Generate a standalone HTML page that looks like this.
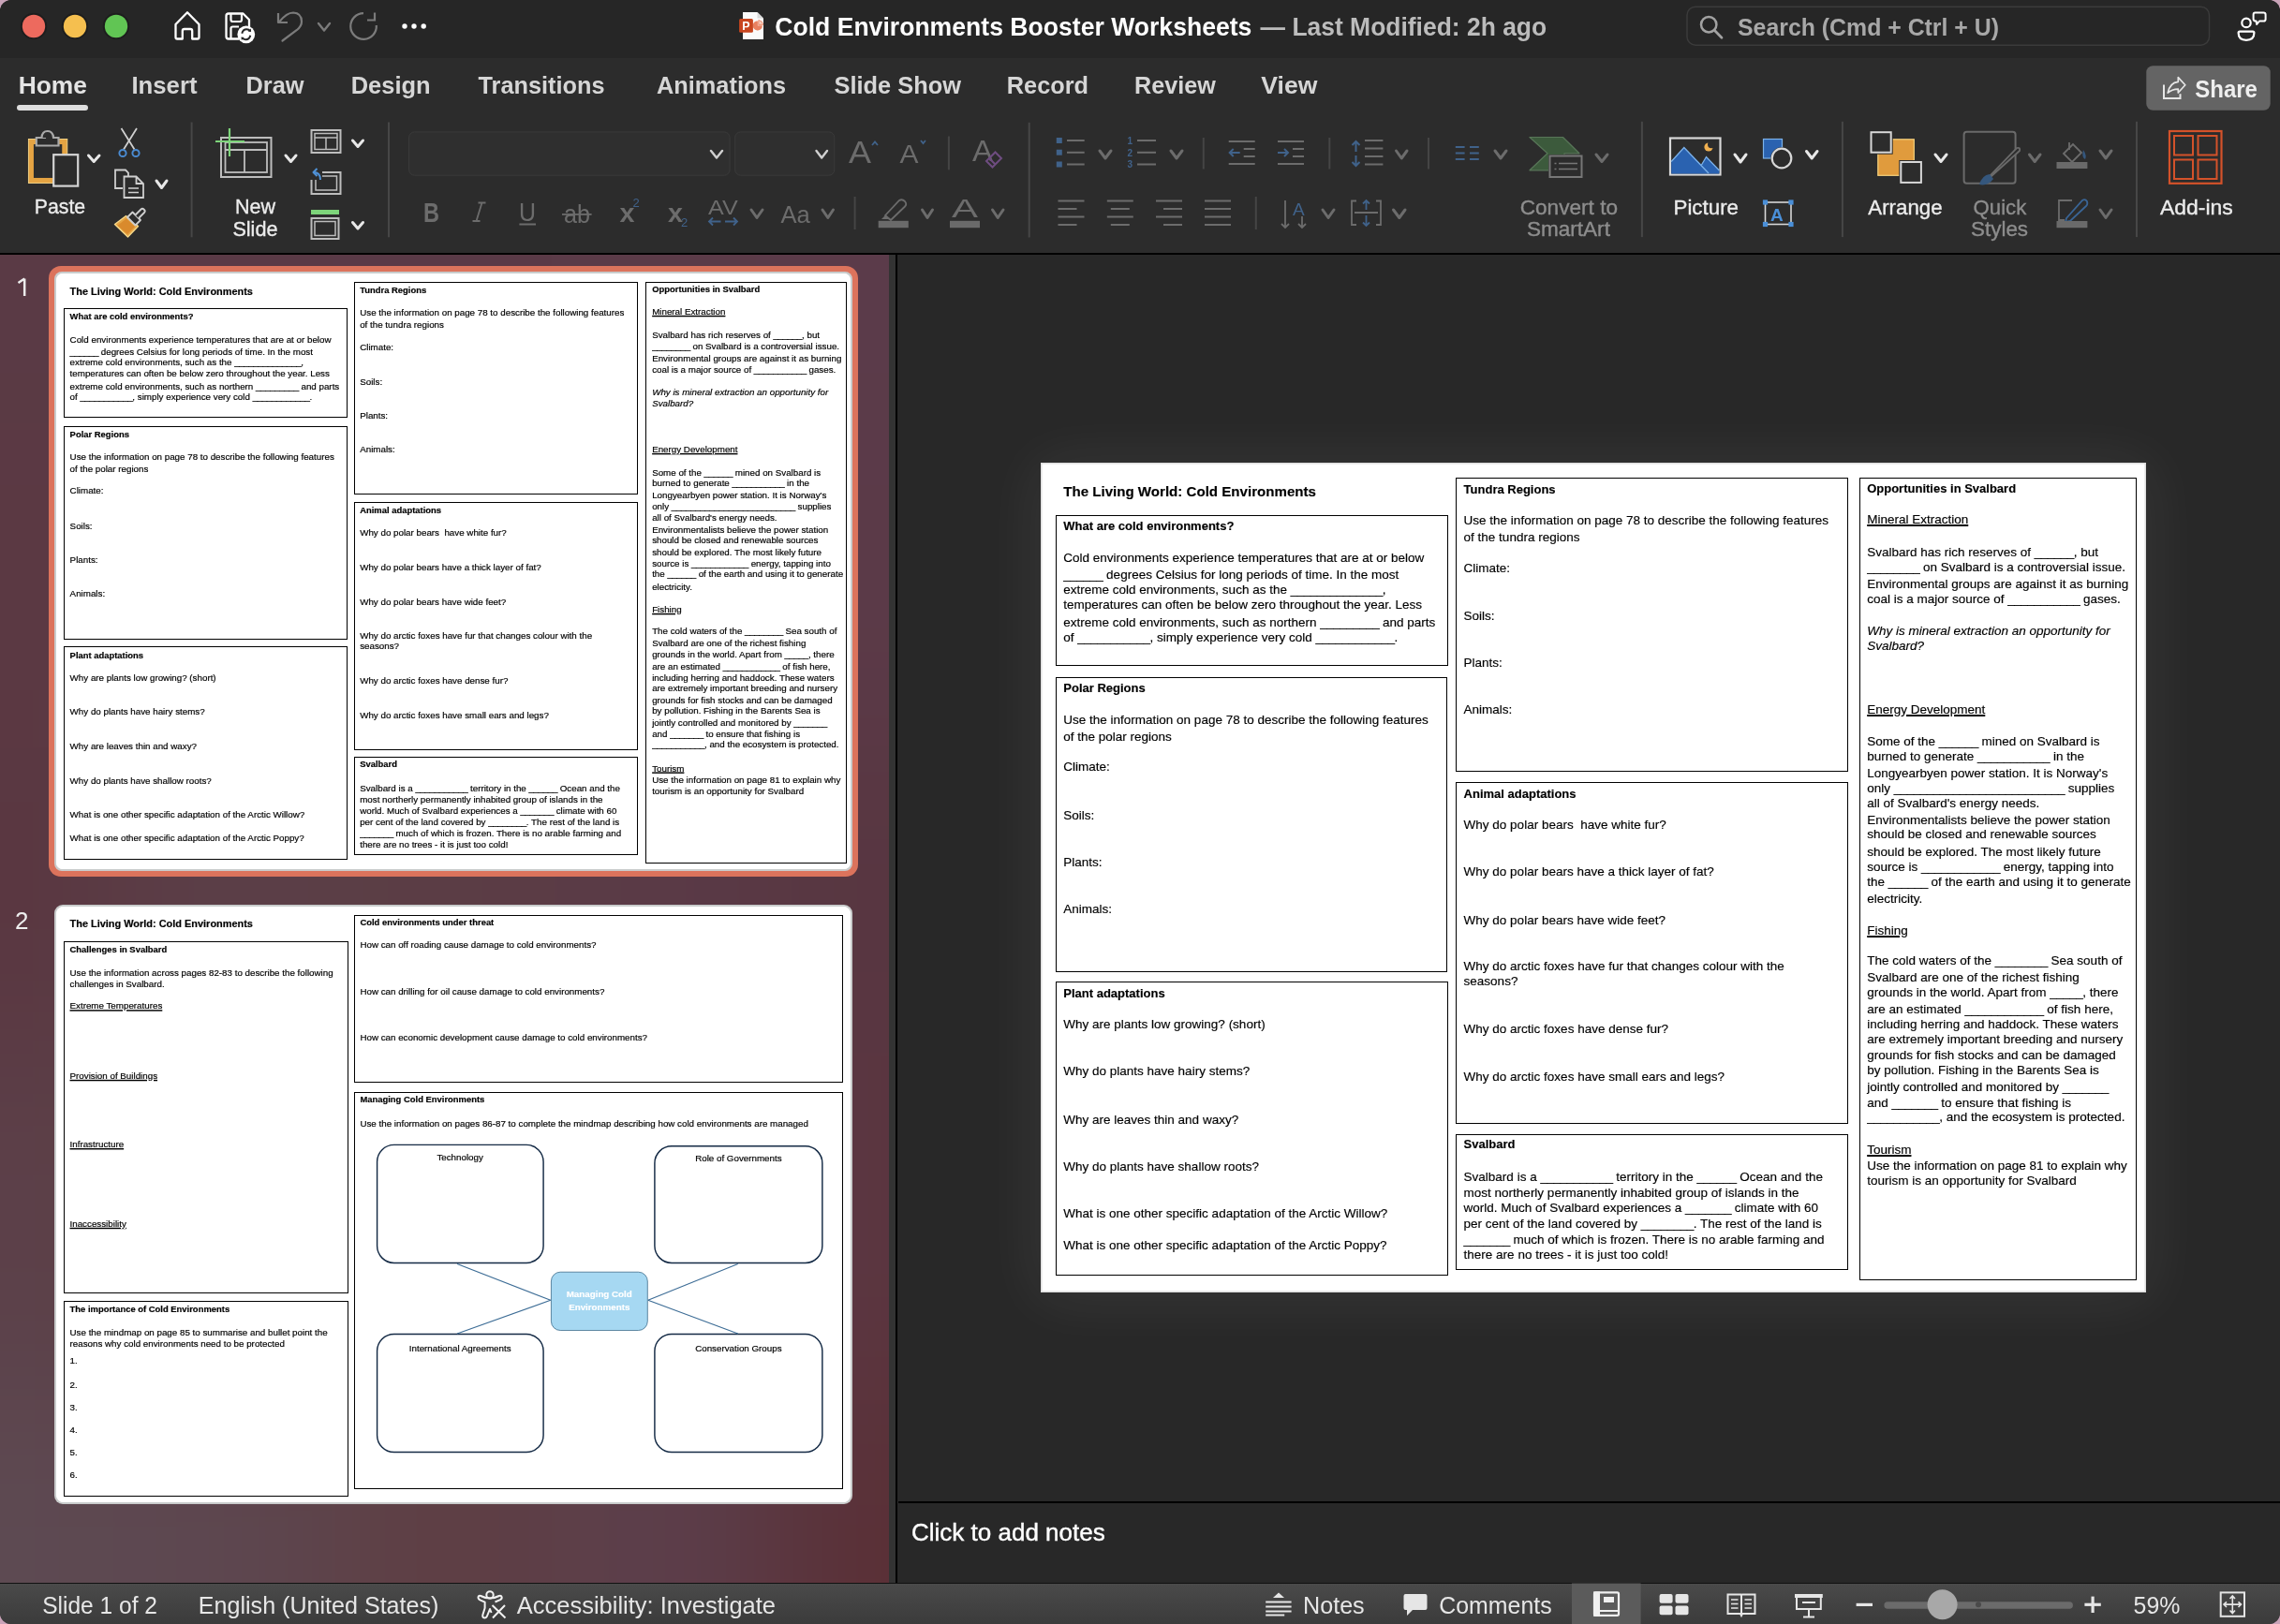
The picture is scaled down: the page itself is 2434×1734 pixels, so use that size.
<!DOCTYPE html><html><head><meta charset="utf-8"><style>
*{box-sizing:border-box;margin:0;padding:0}
html,body{width:2434px;height:1734px;overflow:hidden;background:#c9a3b8;font-family:"Liberation Sans",sans-serif}
.a{position:absolute}
#win{will-change:transform;position:absolute;left:0;top:0;width:2434px;height:1734px;border-radius:12px 12px 12px 12px;overflow:hidden;background:#2c2c2c}
.slide{position:absolute;left:0;top:0;width:1180px;height:886px;background:#fff;transform-origin:0 0;overflow:hidden}
.t{position:absolute;white-space:pre;line-height:1;color:#000;font-family:"Liberation Sans",sans-serif;-webkit-text-stroke:0.15px currentColor}
.bx{position:absolute;border:1px solid #000}
.u_{letter-spacing:-0.5px}
.th .bx{border-width:1.75px}
.th .t{-webkit-text-stroke:0.25px currentColor}
.w{position:absolute;white-space:pre;line-height:1;font-family:"Liberation Sans",sans-serif}
</style></head><body><div id="win">
<div class="a" style="left:0;top:0;width:2434px;height:62px;background:#262626"></div>
<div class="a" style="left:0;top:62px;width:2434px;height:208px;background:#2c2c2c"></div>
<div class="a" style="left:0;top:270px;width:2434px;height:2px;background:#000"></div>
<div class="a" style="left:0;top:272px;width:949px;height:1418px;overflow:hidden;background:#5b3a44"><div style="position:absolute;left:0;top:0;width:949px;height:1418px;filter:blur(90px)"><div style="position:absolute;left:-300px;top:-572px;width:420px;height:756px;background:#5a3a45"></div><div style="position:absolute;left:120px;top:-572px;width:238px;height:756px;background:#5a3a46"></div><div style="position:absolute;left:358px;top:-572px;width:235px;height:756px;background:#5a3a47"></div><div style="position:absolute;left:592px;top:-572px;width:237px;height:756px;background:#5b3b48"></div><div style="position:absolute;left:830px;top:-572px;width:420px;height:756px;background:#5b3b4a"></div><div style="position:absolute;left:-300px;top:184px;width:420px;height:339px;background:#5b3943"></div><div style="position:absolute;left:120px;top:184px;width:238px;height:339px;background:#5b3a45"></div><div style="position:absolute;left:358px;top:184px;width:235px;height:339px;background:#5b3944"></div><div style="position:absolute;left:592px;top:184px;width:237px;height:339px;background:#5b3a47"></div><div style="position:absolute;left:830px;top:184px;width:420px;height:339px;background:#5b3a48"></div><div style="position:absolute;left:-300px;top:523px;width:420px;height:330px;background:#5a3640"></div><div style="position:absolute;left:120px;top:523px;width:238px;height:330px;background:#5b3f48"></div><div style="position:absolute;left:358px;top:523px;width:235px;height:330px;background:#5b3d44"></div><div style="position:absolute;left:592px;top:523px;width:237px;height:330px;background:#5a3a47"></div><div style="position:absolute;left:830px;top:523px;width:420px;height:330px;background:#583640"></div><div style="position:absolute;left:-300px;top:853px;width:420px;height:370px;background:#5c4049"></div><div style="position:absolute;left:120px;top:853px;width:238px;height:370px;background:#5c3f46"></div><div style="position:absolute;left:358px;top:853px;width:235px;height:370px;background:#5d3c42"></div><div style="position:absolute;left:592px;top:853px;width:237px;height:370px;background:#5c3b45"></div><div style="position:absolute;left:830px;top:853px;width:420px;height:370px;background:#5b3540"></div><div style="position:absolute;left:-300px;top:1223px;width:420px;height:405px;background:#5d4a52"></div><div style="position:absolute;left:120px;top:1223px;width:238px;height:405px;background:#5d4750"></div><div style="position:absolute;left:358px;top:1223px;width:235px;height:405px;background:#5e3e43"></div><div style="position:absolute;left:592px;top:1223px;width:237px;height:405px;background:#5c3f4c"></div><div style="position:absolute;left:830px;top:1223px;width:420px;height:405px;background:#5a2f35"></div></div></div>
<div class="a" style="left:949px;top:272px;width:7px;height:1418px;background:#333"></div>
<div class="a" style="left:956px;top:272px;width:2px;height:1418px;background:#000"></div>
<div class="a" style="left:958px;top:272px;width:1476px;height:1331px;background:#282828"></div>
<div class="a" style="left:959px;top:1603px;width:1475px;height:2px;background:#000"></div>
<div class="a" style="left:958px;top:1605px;width:1476px;height:85px;background:#282828"></div>
<div class="w" style="left:973px;top:1623px;font-size:26px;color:#fff;-webkit-text-stroke:0.4px #fff">Click to add notes</div>
<div class="a" style="left:0;top:1690px;width:2434px;height:1px;background:#111"></div>
<div class="a" style="left:0;top:1691px;width:2434px;height:43px;background:linear-gradient(180deg,#4a4a4a,#3b3b3b)"></div>
<div class="slide" style="left:1111px;top:494px;box-shadow:inset 0 0 0 1.5px #dedede, 0 3px 60px 4px rgba(255,255,255,0.075);"><div class="t" style="left:24.2px;top:22.8px;font-size:15.1px;font-weight:bold;">The Living World: Cold Environments</div>
<div class="bx" style="left:16.0px;top:56.0px;width:418.6px;height:161.0px;"></div>
<div class="bx" style="left:15.6px;top:229.3px;width:418.4px;height:314.3px;"></div>
<div class="bx" style="left:16.3px;top:554.2px;width:418.3px;height:314.3px;"></div>
<div class="bx" style="left:443.1px;top:16.4px;width:418.6px;height:314.0px;"></div>
<div class="bx" style="left:443.3px;top:341.4px;width:418.4px;height:365.1px;"></div>
<div class="bx" style="left:443.3px;top:717.1px;width:418.4px;height:144.6px;"></div>
<div class="bx" style="left:873.5px;top:16.3px;width:296.7px;height:857.2px;"></div>
<div class="t" style="left:24.3px;top:61.0px;font-size:13.0px;font-weight:bold;">What are cold environments?</div>
<div class="t" style="left:24.3px;top:95.3px;font-size:13.5px;">Cold environments experience temperatures that are at or below</div>
<div class="t" style="left:24.3px;top:113.2px;font-size:13.5px;"><span class="u_">______</span> degrees Celsius for long periods of time. In the most</div>
<div class="t" style="left:24.3px;top:129.2px;font-size:13.5px;">extreme cold environments, such as the <span class="u_">______________</span>,</div>
<div class="t" style="left:24.3px;top:145.2px;font-size:13.5px;">temperatures can often be below zero throughout the year. Less</div>
<div class="t" style="left:24.3px;top:163.5px;font-size:13.5px;">extreme cold environments, such as northern <span class="u_">_________</span> and parts</div>
<div class="t" style="left:24.3px;top:179.5px;font-size:13.5px;">of <span class="u_">___________</span>, simply experience very cold <span class="u_">____________</span>.</div>
<div class="t" style="left:24.3px;top:234.3px;font-size:13.0px;font-weight:bold;">Polar Regions</div>
<div class="t" style="left:24.3px;top:268.1px;font-size:13.5px;">Use the information on page 78 to describe the following features</div>
<div class="t" style="left:24.3px;top:285.7px;font-size:13.5px;">of the polar regions</div>
<div class="t" style="left:24.3px;top:317.8px;font-size:13.5px;">Climate:</div>
<div class="t" style="left:24.3px;top:369.9px;font-size:13.5px;">Soils:</div>
<div class="t" style="left:24.3px;top:420.2px;font-size:13.5px;">Plants:</div>
<div class="t" style="left:24.3px;top:470.1px;font-size:13.5px;">Animals:</div>
<div class="t" style="left:24.3px;top:559.6px;font-size:13.0px;font-weight:bold;">Plant adaptations</div>
<div class="t" style="left:24.3px;top:592.8px;font-size:13.5px;">Why are plants low growing? (short)</div>
<div class="t" style="left:24.3px;top:642.5px;font-size:13.5px;">Why do plants have hairy stems?</div>
<div class="t" style="left:24.3px;top:694.7px;font-size:13.5px;">Why are leaves thin and waxy?</div>
<div class="t" style="left:24.3px;top:744.7px;font-size:13.5px;">Why do plants have shallow roots?</div>
<div class="t" style="left:24.3px;top:794.7px;font-size:13.5px;">What is one other specific adaptation of the Arctic Willow?</div>
<div class="t" style="left:24.3px;top:828.8px;font-size:13.5px;">What is one other specific adaptation of the Arctic Poppy?</div>
<div class="t" style="left:451.6px;top:21.7px;font-size:13.0px;font-weight:bold;">Tundra Regions</div>
<div class="t" style="left:451.6px;top:55.2px;font-size:13.5px;">Use the information on page 78 to describe the following features</div>
<div class="t" style="left:451.6px;top:73.1px;font-size:13.5px;">of the tundra regions</div>
<div class="t" style="left:451.6px;top:105.5px;font-size:13.5px;">Climate:</div>
<div class="t" style="left:451.6px;top:157.3px;font-size:13.5px;">Soils:</div>
<div class="t" style="left:451.6px;top:206.9px;font-size:13.5px;">Plants:</div>
<div class="t" style="left:451.6px;top:256.8px;font-size:13.5px;">Animals:</div>
<div class="t" style="left:451.6px;top:346.7px;font-size:13.0px;font-weight:bold;">Animal adaptations</div>
<div class="t" style="left:451.6px;top:380.2px;font-size:13.5px;">Why do polar bears  have white fur?</div>
<div class="t" style="left:451.6px;top:430.4px;font-size:13.5px;">Why do polar bears have a thick layer of fat?</div>
<div class="t" style="left:451.6px;top:482.2px;font-size:13.5px;">Why do polar bears have wide feet?</div>
<div class="t" style="left:451.6px;top:531.4px;font-size:13.5px;">Why do arctic foxes have fur that changes colour with the</div>
<div class="t" style="left:451.6px;top:547.4px;font-size:13.5px;">seasons?</div>
<div class="t" style="left:451.6px;top:597.9px;font-size:13.5px;">Why do arctic foxes have dense fur?</div>
<div class="t" style="left:451.6px;top:649.1px;font-size:13.5px;">Why do arctic foxes have small ears and legs?</div>
<div class="t" style="left:451.6px;top:721.4px;font-size:13.0px;font-weight:bold;">Svalbard</div>
<div class="t" style="left:451.6px;top:755.5px;font-size:13.5px;">Svalbard is a <span class="u_">___________</span> territory in the <span class="u_">______</span> Ocean and the</div>
<div class="t" style="left:451.6px;top:773.2px;font-size:13.5px;">most northerly permanently inhabited group of islands in the</div>
<div class="t" style="left:451.6px;top:789.4px;font-size:13.5px;">world. Much of Svalbard experiences a <span class="u_">_______</span> climate with 60</div>
<div class="t" style="left:451.6px;top:805.5px;font-size:13.5px;">per cent of the land covered by <span class="u_">________</span>. The rest of the land is</div>
<div class="t" style="left:451.6px;top:823.2px;font-size:13.5px;"><span class="u_">_______</span> much of which is frozen. There is no arable farming and</div>
<div class="t" style="left:451.6px;top:839.2px;font-size:13.5px;">there are no trees - it is just too cold!</div>
<div class="t" style="left:882.2px;top:21.2px;font-size:13.0px;font-weight:bold;">Opportunities in Svalbard</div>
<div class="t" style="left:882.2px;top:54.1px;font-size:13.5px;text-decoration:underline;text-decoration-thickness:1.5px;text-underline-offset:1px;">Mineral Extraction</div>
<div class="t" style="left:882.2px;top:88.8px;font-size:13.5px;">Svalbard has rich reserves of <span class="u_">______</span>, but</div>
<div class="t" style="left:882.2px;top:104.7px;font-size:13.5px;"><span class="u_">________</span> on Svalbard is a controversial issue.</div>
<div class="t" style="left:882.2px;top:123.0px;font-size:13.5px;">Environmental groups are against it as burning</div>
<div class="t" style="left:882.2px;top:138.6px;font-size:13.5px;">coal is a major source of <span class="u_">___________</span> gases.</div>
<div class="t" style="left:882.2px;top:172.8px;font-size:13.5px;font-style:italic;">Why is mineral extraction an opportunity for</div>
<div class="t" style="left:882.2px;top:188.7px;font-size:13.5px;font-style:italic;">Svalbard?</div>
<div class="t" style="left:882.2px;top:256.7px;font-size:13.5px;text-decoration:underline;text-decoration-thickness:1.5px;text-underline-offset:1px;">Energy Development</div>
<div class="t" style="left:882.2px;top:290.9px;font-size:13.5px;">Some of the <span class="u_">______</span> mined on Svalbard is</div>
<div class="t" style="left:882.2px;top:306.5px;font-size:13.5px;">burned to generate <span class="u_">___________</span> in the</div>
<div class="t" style="left:882.2px;top:324.7px;font-size:13.5px;">Longyearbyen power station. It is Norway's</div>
<div class="t" style="left:882.2px;top:340.7px;font-size:13.5px;">only <span class="u_">__________________________</span> supplies</div>
<div class="t" style="left:882.2px;top:356.6px;font-size:13.5px;">all of Svalbard's energy needs.</div>
<div class="t" style="left:882.2px;top:374.8px;font-size:13.5px;">Environmentalists believe the power station</div>
<div class="t" style="left:882.2px;top:390.4px;font-size:13.5px;">should be closed and renewable sources</div>
<div class="t" style="left:882.2px;top:408.7px;font-size:13.5px;">should be explored. The most likely future</div>
<div class="t" style="left:882.2px;top:424.6px;font-size:13.5px;">source is <span class="u_">____________</span> energy, tapping into</div>
<div class="t" style="left:882.2px;top:440.5px;font-size:13.5px;">the <span class="u_">______</span> of the earth and using it to generate</div>
<div class="t" style="left:882.2px;top:459.0px;font-size:13.5px;">electricity.</div>
<div class="t" style="left:882.2px;top:492.8px;font-size:13.5px;text-decoration:underline;text-decoration-thickness:1.5px;text-underline-offset:1px;">Fishing</div>
<div class="t" style="left:882.2px;top:524.6px;font-size:13.5px;">The cold waters of the <span class="u_">________</span> Sea south of</div>
<div class="t" style="left:882.2px;top:542.6px;font-size:13.5px;">Svalbard are one of the richest fishing</div>
<div class="t" style="left:882.2px;top:558.5px;font-size:13.5px;">grounds in the world. Apart from <span class="u_">_____</span>, there</div>
<div class="t" style="left:882.2px;top:576.5px;font-size:13.5px;">are an estimated <span class="u_">____________</span> of fish here,</div>
<div class="t" style="left:882.2px;top:592.5px;font-size:13.5px;">including herring and haddock. These waters</div>
<div class="t" style="left:882.2px;top:608.6px;font-size:13.5px;">are extremely important breeding and nursery</div>
<div class="t" style="left:882.2px;top:626.3px;font-size:13.5px;">grounds for fish stocks and can be damaged</div>
<div class="t" style="left:882.2px;top:642.4px;font-size:13.5px;">by pollution. Fishing in the Barents Sea is</div>
<div class="t" style="left:882.2px;top:660.4px;font-size:13.5px;">jointly controlled and monitored by <span class="u_">_______</span></div>
<div class="t" style="left:882.2px;top:676.5px;font-size:13.5px;">and <span class="u_">_______</span> to ensure that fishing is</div>
<div class="t" style="left:882.2px;top:692.3px;font-size:13.5px;"><span class="u_">___________</span>, and the ecosystem is protected.</div>
<div class="t" style="left:882.2px;top:726.9px;font-size:13.5px;text-decoration:underline;text-decoration-thickness:1.5px;text-underline-offset:1px;">Tourism</div>
<div class="t" style="left:882.2px;top:744.4px;font-size:13.5px;">Use the information on page 81 to explain why</div>
<div class="t" style="left:882.2px;top:760.2px;font-size:13.5px;">tourism is an opportunity for Svalbard</div></div>
<div class="a" style="left:52px;top:284px;width:864px;height:652px;border-radius:13px;background:#dc735c"></div>
<div class="a" style="left:58px;top:290px;width:852px;height:640px;border-radius:8px;background:#c9cccc"></div>
<div class="a" style="left:60px;top:292px;width:848px;height:636px;border-radius:7px;overflow:hidden;background:#fff"><div class="slide th" style="left:-3.4px;top:-3.2px;transform:scale(0.7245)"><div class="t" style="left:24.2px;top:22.8px;font-size:15.1px;font-weight:bold;">The Living World: Cold Environments</div>







<div class="t" style="left:24.3px;top:61.0px;font-size:13.0px;font-weight:bold;">What are cold environments?</div>
<div class="t" style="left:24.3px;top:95.3px;font-size:13.5px;">Cold environments experience temperatures that are at or below</div>
<div class="t" style="left:24.3px;top:113.2px;font-size:13.5px;"><span class="u_">______</span> degrees Celsius for long periods of time. In the most</div>
<div class="t" style="left:24.3px;top:129.2px;font-size:13.5px;">extreme cold environments, such as the <span class="u_">______________</span>,</div>
<div class="t" style="left:24.3px;top:145.2px;font-size:13.5px;">temperatures can often be below zero throughout the year. Less</div>
<div class="t" style="left:24.3px;top:163.5px;font-size:13.5px;">extreme cold environments, such as northern <span class="u_">_________</span> and parts</div>
<div class="t" style="left:24.3px;top:179.5px;font-size:13.5px;">of <span class="u_">___________</span>, simply experience very cold <span class="u_">____________</span>.</div>
<div class="t" style="left:24.3px;top:234.3px;font-size:13.0px;font-weight:bold;">Polar Regions</div>
<div class="t" style="left:24.3px;top:268.1px;font-size:13.5px;">Use the information on page 78 to describe the following features</div>
<div class="t" style="left:24.3px;top:285.7px;font-size:13.5px;">of the polar regions</div>
<div class="t" style="left:24.3px;top:317.8px;font-size:13.5px;">Climate:</div>
<div class="t" style="left:24.3px;top:369.9px;font-size:13.5px;">Soils:</div>
<div class="t" style="left:24.3px;top:420.2px;font-size:13.5px;">Plants:</div>
<div class="t" style="left:24.3px;top:470.1px;font-size:13.5px;">Animals:</div>
<div class="t" style="left:24.3px;top:559.6px;font-size:13.0px;font-weight:bold;">Plant adaptations</div>
<div class="t" style="left:24.3px;top:592.8px;font-size:13.5px;">Why are plants low growing? (short)</div>
<div class="t" style="left:24.3px;top:642.5px;font-size:13.5px;">Why do plants have hairy stems?</div>
<div class="t" style="left:24.3px;top:694.7px;font-size:13.5px;">Why are leaves thin and waxy?</div>
<div class="t" style="left:24.3px;top:744.7px;font-size:13.5px;">Why do plants have shallow roots?</div>
<div class="t" style="left:24.3px;top:794.7px;font-size:13.5px;">What is one other specific adaptation of the Arctic Willow?</div>
<div class="t" style="left:24.3px;top:828.8px;font-size:13.5px;">What is one other specific adaptation of the Arctic Poppy?</div>
<div class="t" style="left:451.6px;top:21.7px;font-size:13.0px;font-weight:bold;">Tundra Regions</div>
<div class="t" style="left:451.6px;top:55.2px;font-size:13.5px;">Use the information on page 78 to describe the following features</div>
<div class="t" style="left:451.6px;top:73.1px;font-size:13.5px;">of the tundra regions</div>
<div class="t" style="left:451.6px;top:105.5px;font-size:13.5px;">Climate:</div>
<div class="t" style="left:451.6px;top:157.3px;font-size:13.5px;">Soils:</div>
<div class="t" style="left:451.6px;top:206.9px;font-size:13.5px;">Plants:</div>
<div class="t" style="left:451.6px;top:256.8px;font-size:13.5px;">Animals:</div>
<div class="t" style="left:451.6px;top:346.7px;font-size:13.0px;font-weight:bold;">Animal adaptations</div>
<div class="t" style="left:451.6px;top:380.2px;font-size:13.5px;">Why do polar bears  have white fur?</div>
<div class="t" style="left:451.6px;top:430.4px;font-size:13.5px;">Why do polar bears have a thick layer of fat?</div>
<div class="t" style="left:451.6px;top:482.2px;font-size:13.5px;">Why do polar bears have wide feet?</div>
<div class="t" style="left:451.6px;top:531.4px;font-size:13.5px;">Why do arctic foxes have fur that changes colour with the</div>
<div class="t" style="left:451.6px;top:547.4px;font-size:13.5px;">seasons?</div>
<div class="t" style="left:451.6px;top:597.9px;font-size:13.5px;">Why do arctic foxes have dense fur?</div>
<div class="t" style="left:451.6px;top:649.1px;font-size:13.5px;">Why do arctic foxes have small ears and legs?</div>
<div class="t" style="left:451.6px;top:721.4px;font-size:13.0px;font-weight:bold;">Svalbard</div>
<div class="t" style="left:451.6px;top:755.5px;font-size:13.5px;">Svalbard is a <span class="u_">___________</span> territory in the <span class="u_">______</span> Ocean and the</div>
<div class="t" style="left:451.6px;top:773.2px;font-size:13.5px;">most northerly permanently inhabited group of islands in the</div>
<div class="t" style="left:451.6px;top:789.4px;font-size:13.5px;">world. Much of Svalbard experiences a <span class="u_">_______</span> climate with 60</div>
<div class="t" style="left:451.6px;top:805.5px;font-size:13.5px;">per cent of the land covered by <span class="u_">________</span>. The rest of the land is</div>
<div class="t" style="left:451.6px;top:823.2px;font-size:13.5px;"><span class="u_">_______</span> much of which is frozen. There is no arable farming and</div>
<div class="t" style="left:451.6px;top:839.2px;font-size:13.5px;">there are no trees - it is just too cold!</div>
<div class="t" style="left:882.2px;top:21.2px;font-size:13.0px;font-weight:bold;">Opportunities in Svalbard</div>
<div class="t" style="left:882.2px;top:54.1px;font-size:13.5px;text-decoration:underline;text-decoration-thickness:1.5px;text-underline-offset:1px;">Mineral Extraction</div>
<div class="t" style="left:882.2px;top:88.8px;font-size:13.5px;">Svalbard has rich reserves of <span class="u_">______</span>, but</div>
<div class="t" style="left:882.2px;top:104.7px;font-size:13.5px;"><span class="u_">________</span> on Svalbard is a controversial issue.</div>
<div class="t" style="left:882.2px;top:123.0px;font-size:13.5px;">Environmental groups are against it as burning</div>
<div class="t" style="left:882.2px;top:138.6px;font-size:13.5px;">coal is a major source of <span class="u_">___________</span> gases.</div>
<div class="t" style="left:882.2px;top:172.8px;font-size:13.5px;font-style:italic;">Why is mineral extraction an opportunity for</div>
<div class="t" style="left:882.2px;top:188.7px;font-size:13.5px;font-style:italic;">Svalbard?</div>
<div class="t" style="left:882.2px;top:256.7px;font-size:13.5px;text-decoration:underline;text-decoration-thickness:1.5px;text-underline-offset:1px;">Energy Development</div>
<div class="t" style="left:882.2px;top:290.9px;font-size:13.5px;">Some of the <span class="u_">______</span> mined on Svalbard is</div>
<div class="t" style="left:882.2px;top:306.5px;font-size:13.5px;">burned to generate <span class="u_">___________</span> in the</div>
<div class="t" style="left:882.2px;top:324.7px;font-size:13.5px;">Longyearbyen power station. It is Norway's</div>
<div class="t" style="left:882.2px;top:340.7px;font-size:13.5px;">only <span class="u_">__________________________</span> supplies</div>
<div class="t" style="left:882.2px;top:356.6px;font-size:13.5px;">all of Svalbard's energy needs.</div>
<div class="t" style="left:882.2px;top:374.8px;font-size:13.5px;">Environmentalists believe the power station</div>
<div class="t" style="left:882.2px;top:390.4px;font-size:13.5px;">should be closed and renewable sources</div>
<div class="t" style="left:882.2px;top:408.7px;font-size:13.5px;">should be explored. The most likely future</div>
<div class="t" style="left:882.2px;top:424.6px;font-size:13.5px;">source is <span class="u_">____________</span> energy, tapping into</div>
<div class="t" style="left:882.2px;top:440.5px;font-size:13.5px;">the <span class="u_">______</span> of the earth and using it to generate</div>
<div class="t" style="left:882.2px;top:459.0px;font-size:13.5px;">electricity.</div>
<div class="t" style="left:882.2px;top:492.8px;font-size:13.5px;text-decoration:underline;text-decoration-thickness:1.5px;text-underline-offset:1px;">Fishing</div>
<div class="t" style="left:882.2px;top:524.6px;font-size:13.5px;">The cold waters of the <span class="u_">________</span> Sea south of</div>
<div class="t" style="left:882.2px;top:542.6px;font-size:13.5px;">Svalbard are one of the richest fishing</div>
<div class="t" style="left:882.2px;top:558.5px;font-size:13.5px;">grounds in the world. Apart from <span class="u_">_____</span>, there</div>
<div class="t" style="left:882.2px;top:576.5px;font-size:13.5px;">are an estimated <span class="u_">____________</span> of fish here,</div>
<div class="t" style="left:882.2px;top:592.5px;font-size:13.5px;">including herring and haddock. These waters</div>
<div class="t" style="left:882.2px;top:608.6px;font-size:13.5px;">are extremely important breeding and nursery</div>
<div class="t" style="left:882.2px;top:626.3px;font-size:13.5px;">grounds for fish stocks and can be damaged</div>
<div class="t" style="left:882.2px;top:642.4px;font-size:13.5px;">by pollution. Fishing in the Barents Sea is</div>
<div class="t" style="left:882.2px;top:660.4px;font-size:13.5px;">jointly controlled and monitored by <span class="u_">_______</span></div>
<div class="t" style="left:882.2px;top:676.5px;font-size:13.5px;">and <span class="u_">_______</span> to ensure that fishing is</div>
<div class="t" style="left:882.2px;top:692.3px;font-size:13.5px;"><span class="u_">___________</span>, and the ecosystem is protected.</div>
<div class="t" style="left:882.2px;top:726.9px;font-size:13.5px;text-decoration:underline;text-decoration-thickness:1.5px;text-underline-offset:1px;">Tourism</div>
<div class="t" style="left:882.2px;top:744.4px;font-size:13.5px;">Use the information on page 81 to explain why</div>
<div class="t" style="left:882.2px;top:760.2px;font-size:13.5px;">tourism is an opportunity for Svalbard</div></div></div>
<div class="a" style="left:68px;top:329px;width:303px;height:117px;border:1px solid #000"></div><div class="a" style="left:68px;top:455px;width:303px;height:228px;border:1px solid #000"></div><div class="a" style="left:68px;top:690px;width:303px;height:228px;border:1px solid #000"></div><div class="a" style="left:378px;top:301px;width:303px;height:227px;border:1px solid #000"></div><div class="a" style="left:378px;top:536px;width:303px;height:265px;border:1px solid #000"></div><div class="a" style="left:378px;top:808px;width:303px;height:105px;border:1px solid #000"></div><div class="a" style="left:689px;top:301px;width:215px;height:621px;border:1px solid #000"></div>
<svg class="a" style="position:absolute;left:0;top:280px" width="50" height="50"><path d="M26.2 17.5 V36 M26.2 17.5 L19.5 22" fill="none" stroke="#ececec" stroke-width="2.5" stroke-linecap="butt" stroke-linejoin="round"/></svg>
<div class="a" style="left:58px;top:966px;width:852px;height:640px;border-radius:9px;background:#c9cccc"></div>
<div class="a" style="left:60px;top:968px;width:848px;height:636px;border-radius:8px;overflow:hidden;background:#fff"><div class="slide th" style="left:-3.4px;top:-4.8px;transform:scale(0.7245)"><div class="t" style="left:24.2px;top:23.9px;font-size:15.1px;font-weight:bold;">The Living World: Cold Environments</div>




<div class="t" style="left:24.2px;top:63.3px;font-size:13.0px;font-weight:bold;">Challenges in Svalbard</div>
<div class="t" style="left:24.2px;top:97.8px;font-size:13.5px;">Use the information across pages 82-83 to describe the following</div>
<div class="t" style="left:24.2px;top:114.6px;font-size:13.5px;">challenges in Svalbard.</div>
<div class="t" style="left:24.2px;top:147.2px;font-size:13.5px;text-decoration:underline;text-decoration-thickness:1.5px;text-underline-offset:1px;">Extreme Temperatures</div>
<div class="t" style="left:24.2px;top:250.0px;font-size:13.5px;text-decoration:underline;text-decoration-thickness:1.5px;text-underline-offset:1px;">Provision of Buildings</div>
<div class="t" style="left:24.2px;top:350.6px;font-size:13.5px;text-decoration:underline;text-decoration-thickness:1.5px;text-underline-offset:1px;">Infrastructure</div>
<div class="t" style="left:24.2px;top:467.9px;font-size:13.5px;text-decoration:underline;text-decoration-thickness:1.5px;text-underline-offset:1px;">Inaccessibility</div>
<div class="t" style="left:24.2px;top:593.3px;font-size:13.0px;font-weight:bold;">The importance of Cold Environments</div>
<div class="t" style="left:24.2px;top:627.8px;font-size:13.5px;">Use the mindmap on page 85 to summarise and bullet point the</div>
<div class="t" style="left:24.2px;top:644.1px;font-size:13.5px;">reasons why cold environments need to be protected</div>
<div class="t" style="left:24.2px;top:670.1px;font-size:13.5px;">1.</div>
<div class="t" style="left:24.2px;top:704.5px;font-size:13.5px;">2.</div>
<div class="t" style="left:24.2px;top:737.6px;font-size:13.5px;">3.</div>
<div class="t" style="left:24.2px;top:770.8px;font-size:13.5px;">4.</div>
<div class="t" style="left:24.2px;top:805.0px;font-size:13.5px;">5.</div>
<div class="t" style="left:24.2px;top:838.1px;font-size:13.5px;">6.</div>
<div class="t" style="left:451.9px;top:22.7px;font-size:13.0px;font-weight:bold;">Cold environments under threat</div>
<div class="t" style="left:451.9px;top:57.0px;font-size:13.5px;">How can off roading cause damage to cold environments?</div>
<div class="t" style="left:451.9px;top:126.3px;font-size:13.5px;">How can drilling for oil cause damage to cold environments?</div>
<div class="t" style="left:451.9px;top:192.6px;font-size:13.5px;">How can economic development cause damage to cold environments?</div>
<div class="t" style="left:451.9px;top:285.3px;font-size:13.0px;font-weight:bold;">Managing Cold Environments</div>
<div class="t" style="left:451.9px;top:319.8px;font-size:13.5px;">Use the information on pages 86-87 to complete the mindmap describing how cold environments are managed</div>
<div class="bx" style="left:475.8px;top:357.3px;width:246.9px;height:176.1px;border:2.2px solid #142a45;border-radius:26px;"></div><div class="t" style="left:475.8px;width:246.9px;text-align:center;top:370.4px;font-size:13.5px;">Technology</div>
<div class="bx" style="left:885.4px;top:358.6px;width:248.2px;height:174.9px;border:2.2px solid #142a45;border-radius:26px;"></div><div class="t" style="left:885.4px;width:248.2px;text-align:center;top:372.0px;font-size:13.5px;">Role of Governments</div>
<div class="bx" style="left:475.8px;top:636.3px;width:246.9px;height:175.6px;border:2.2px solid #142a45;border-radius:26px;"></div><div class="t" style="left:475.8px;width:246.9px;text-align:center;top:651.1px;font-size:13.5px;">International Agreements</div>
<div class="bx" style="left:885.4px;top:636.3px;width:248.2px;height:175.6px;border:2.2px solid #142a45;border-radius:26px;"></div><div class="t" style="left:885.4px;width:248.2px;text-align:center;top:651.1px;font-size:13.5px;">Conservation Groups</div>
<svg style="position:absolute;left:0;top:0;overflow:visible" width="1180" height="886"><line x1="594.9" y1="533.5" x2="732.6" y2="586.9" stroke="#3d6d96" stroke-width="1.6"/><line x1="1008.7" y1="533.5" x2="876.2" y2="586.9" stroke="#3d6d96" stroke-width="1.6"/><line x1="594.9" y1="636.3" x2="732.6" y2="586.9" stroke="#3d6d96" stroke-width="1.6"/><line x1="1008.7" y1="636.3" x2="876.2" y2="586.9" stroke="#3d6d96" stroke-width="1.6"/></svg>
<div class="bx" style="left:732.6px;top:545.1px;width:143.5px;height:87.2px;background:#a6d8f2;border:1.4px solid #2f5f80;border-radius:14px;"></div>
<div class="t" style="left:732.6px;width:143.5px;text-align:center;top:571.5px;font-size:13.5px;color:#fff;font-weight:bold;">Managing Cold</div>
<div class="t" style="left:732.6px;width:143.5px;text-align:center;top:591.2px;font-size:13.5px;color:#fff;font-weight:bold;">Environments</div></div></div>
<div class="a" style="left:68px;top:1005px;width:304px;height:376px;border:1px solid #000"></div><div class="a" style="left:68px;top:1389px;width:304px;height:209px;border:1px solid #000"></div><div class="a" style="left:378px;top:977px;width:522px;height:179px;border:1px solid #000"></div><div class="a" style="left:378px;top:1166px;width:522px;height:424px;border:1px solid #000"></div>
<div class="w" style="left:16px;top:970px;font-size:26px;color:#eee">2</div>
<svg class="a" style="left:0;top:0;position:absolute" width="2434" height="272">
<circle cx="36" cy="28" r="14.2" fill="#1d1d1d"/><circle cx="36" cy="28" r="12.2" fill="#ed6a5e"/>
<circle cx="80" cy="28" r="14.2" fill="#1d1d1d"/><circle cx="80" cy="28" r="12.2" fill="#f5bf4f"/>
<circle cx="124" cy="28" r="14.2" fill="#1d1d1d"/><circle cx="124" cy="28" r="12.2" fill="#61c554"/>
<path d="M187.5 26 L200 13.2 L212.5 26 V39.8 Q212.5 41.5 210.8 41.5 H205.2 V33 Q205.2 31 203.2 31 H196.8 Q194.8 31 194.8 33 V41.5 H189.2 Q187.5 41.5 187.5 39.8 Z" fill="none" stroke="#fff" stroke-width="2.3" stroke-linejoin="round"/>
<path d="M255 41.5 H244 Q241.5 41.5 241.5 39 V17 Q241.5 14.5 244 14.5 H259.5 L266 21 V29" fill="none" stroke="#fff" stroke-width="2.3" stroke-linejoin="round"/>
<path d="M246.5 14.5 V21 Q246.5 23 248.5 23 H256 Q258 23 258 21 V14.5" fill="none" stroke="#fff" stroke-width="2.2"/>
<path d="M246.5 41.5 V30.5 Q246.5 28.5 248.5 28.5 H255" fill="none" stroke="#fff" stroke-width="2.2"/>
<circle cx="262.8" cy="36.8" r="9.4" fill="#fff"/>
<path d="M258.3 35.8 Q259.3 31.3 263.3 31.3 Q265.8 31.3 267.1 33.3 M267.3 37.8 Q266.3 42.3 262.3 42.3 Q259.8 42.3 258.5 40.3" fill="none" stroke="#262626" stroke-width="2"/>
<path d="M264.8 33.6 L268.1 34.1 L267.8 30.6 Z M260.8 40 L257.5 39.5 L257.8 43 Z" fill="#262626"/>
<path d="M297 14 V24 H307" fill="none" stroke="#7b7b7b" stroke-width="2.2" stroke-linejoin="round"/>
<path d="M298 23.5 Q306 13.5 313 13.5 Q322 14 322 23 Q322 28 317 32 L301.5 43.5" fill="none" stroke="#7b7b7b" stroke-width="2.2" stroke-linecap="round"/>
<polyline points="340.0,25.0 346.0,32.5 352.0,25.0" fill="none" stroke="#7b7b7b" stroke-width="2.4" stroke-linecap="round" stroke-linejoin="round"/>
<path d="M401.8 27 A13.8 13.8 0 1 1 388 14.2" fill="none" stroke="#7b7b7b" stroke-width="2.2"/>
<path d="M400 13.6 V21.5 H392" fill="none" stroke="#7b7b7b" stroke-width="2.2"/>
<circle cx="432" cy="28" r="2.7" fill="#fff"/>
<circle cx="442" cy="28" r="2.7" fill="#fff"/>
<circle cx="452.2" cy="28" r="2.7" fill="#fff"/>
<path d="M793 13 H808.5 L815 19.5 V42 H793 Z" fill="#fafafa"/>
<path d="M808.5 13 V19.5 H815" fill="#d8d8d8"/>
<circle cx="808.8" cy="27.4" r="5" fill="#f6c8b8"/><path d="M808.8 22.4 V27.4 H813.8 A5 5 0 1 1 808.8 22.4 Z" fill="#e9805f"/><path d="M809.8 21.5 A5.5 5.5 0 0 1 814.7 26.4 H809.8 Z" fill="#f6c8b8" stroke="#e9805f" stroke-width="0.8"/>
<rect x="789.1" y="19.9" width="14.8" height="14.9" rx="1.5" fill="#c8461f"/>
<text x="792.2" y="31.8" font-family="Liberation Sans" font-size="12.5" font-weight="bold" fill="#fff">P</text>
<text x="827.2" y="38.0" font-family="Liberation Sans" font-size="27" font-weight="bold" fill="#ffffff"  textLength="509.2" lengthAdjust="spacingAndGlyphs">Cold Environments Booster Worksheets</text>
<text x="1345.6" y="38.0" font-family="Liberation Sans" font-size="27" font-weight="bold" fill="#bcbcbc"  textLength="305.6" lengthAdjust="spacingAndGlyphs">— Last Modified: 2h ago</text>
<rect x="1801" y="7.2" width="557.5" height="41" rx="9" fill="#262626" stroke="#3b3b3b" stroke-width="1.5"/>
<circle cx="1824.2" cy="26.2" r="8.2" fill="none" stroke="#a2a2a2" stroke-width="2.5"/><path d="M1830.2 32.2 L1838 40.2" stroke="#a2a2a2" stroke-width="2.7" stroke-linecap="round"/>
<text x="1855.0" y="37.7" font-family="Liberation Sans" font-size="25" font-weight="bold" fill="#a8a8a8"  textLength="279.0" lengthAdjust="spacingAndGlyphs">Search (Cmd + Ctrl + U)</text>
<circle cx="2398" cy="24.4" r="4.7" fill="none" stroke="#fff" stroke-width="2.2"/>
<path d="M2389.6 35 Q2389.6 33.6 2391 33.6 H2405 Q2406.4 33.6 2406.4 35 Q2406.4 42.8 2398 42.8 Q2389.6 42.8 2389.6 35 Z" fill="none" stroke="#fff" stroke-width="2.2"/>
<path d="M2407.5 13.6 H2416.5 Q2418.6 13.6 2418.6 15.7 V20.4 Q2418.6 22.5 2416.5 22.5 H2412 L2409.2 26 L2408.6 22.5 Q2405.6 22.5 2405.6 20.4 V15.7 Q2405.6 13.6 2407.5 13.6 Z" fill="none" stroke="#fff" stroke-width="2" stroke-linejoin="round"/>
<text x="19.7" y="100.2" font-family="Liberation Sans" font-size="26" font-weight="bold" fill="#e4e4e4"  textLength="73.3" lengthAdjust="spacingAndGlyphs">Home</text>
<text x="140.4" y="100.2" font-family="Liberation Sans" font-size="26" font-weight="bold" fill="#d6d6d6"  textLength="70.1" lengthAdjust="spacingAndGlyphs">Insert</text>
<text x="262.5" y="100.2" font-family="Liberation Sans" font-size="26" font-weight="bold" fill="#d6d6d6"  textLength="62.1" lengthAdjust="spacingAndGlyphs">Draw</text>
<text x="374.7" y="100.2" font-family="Liberation Sans" font-size="26" font-weight="bold" fill="#d6d6d6"  textLength="84.9" lengthAdjust="spacingAndGlyphs">Design</text>
<text x="510.5" y="100.2" font-family="Liberation Sans" font-size="26" font-weight="bold" fill="#d6d6d6"  textLength="135.1" lengthAdjust="spacingAndGlyphs">Transitions</text>
<text x="701.0" y="100.2" font-family="Liberation Sans" font-size="26" font-weight="bold" fill="#d6d6d6"  textLength="138.0" lengthAdjust="spacingAndGlyphs">Animations</text>
<text x="890.5" y="100.2" font-family="Liberation Sans" font-size="26" font-weight="bold" fill="#d6d6d6"  textLength="135.5" lengthAdjust="spacingAndGlyphs">Slide Show</text>
<text x="1074.8" y="100.2" font-family="Liberation Sans" font-size="26" font-weight="bold" fill="#d6d6d6"  textLength="87.2" lengthAdjust="spacingAndGlyphs">Record</text>
<text x="1211.0" y="100.2" font-family="Liberation Sans" font-size="26" font-weight="bold" fill="#d6d6d6"  textLength="86.7" lengthAdjust="spacingAndGlyphs">Review</text>
<text x="1346.3" y="100.2" font-family="Liberation Sans" font-size="26" font-weight="bold" fill="#d6d6d6"  textLength="60.1" lengthAdjust="spacingAndGlyphs">View</text>
<rect x="18" y="112" width="76" height="6" rx="3" fill="#dedede"/>
<rect x="2291.3" y="70.2" width="132.4" height="47.6" rx="7" fill="#646464"/>
<path d="M2310 90.4 V105 H2327.5 V100.2" fill="none" stroke="#e6e6e6" stroke-width="2"/>
<path d="M2314.2 99.2 Q2316.5 88.2 2325.3 87.4 V82.6 L2332.8 90.8 L2325.3 99 V95.2 Q2318.5 95.4 2314.2 99.2 Z" fill="none" stroke="#e6e6e6" stroke-width="1.7" stroke-linejoin="round"/>
<text x="2343.2" y="104.2" font-family="Liberation Sans" font-size="25" font-weight="bold" fill="#efefef"  textLength="66.8" lengthAdjust="spacingAndGlyphs">Share</text>
<rect x="33.2" y="151.3" width="35.8" height="41.4" fill="none" stroke="#e5a443" stroke-width="5.5"/>
<rect x="30.4" y="148.5" width="41.4" height="47" fill="none" stroke="#f8d98a" stroke-width="0.9"/>
<path d="M38.8 155.5 V147 H48 Q49 140.5 51 140.5 Q51 140.5 51 140.5 Q56 140.5 57 147 H62.5 V155.5 Z" fill="#2c2c2c" stroke="#a8a8a8" stroke-width="2.2"/>
<path d="M44.5 147 Q45 140 50.7 140 Q56.4 140 57 147" fill="#2c2c2c" stroke="#a8a8a8" stroke-width="2.2"/>
<rect x="57.2" y="165.2" width="26" height="33.4" fill="#2c2c2c" stroke="#d4d4d4" stroke-width="2.2"/>
<polyline points="94.5,166.0 100.2,172.5 106.0,166.0" fill="none" stroke="#e8e8e8" stroke-width="3" stroke-linecap="round" stroke-linejoin="round"/>
<text x="36.8" y="228.0" font-family="Liberation Sans" font-size="22" font-weight="normal" fill="#ececec" stroke="#ececec" stroke-width="0.35" textLength="54.4" lengthAdjust="spacingAndGlyphs">Paste</text>
<path d="M129.5 137 L143.5 159.5 M146 137 L132 159.5" stroke="#cfcfcf" stroke-width="1.8"/>
<circle cx="131" cy="163.5" r="3.6" fill="none" stroke="#4a8ad0" stroke-width="2"/><circle cx="145" cy="163.5" r="3.6" fill="none" stroke="#4a8ad0" stroke-width="2"/>
<path d="M131 201 H123 V181.5 H134 L137 184.5 V188" fill="none" stroke="#cfcfcf" stroke-width="1.8"/>
<path d="M132.5 188.5 H145.5 L153 196 V211 H132.5 Z M145.5 188.5 V196 H153" fill="#2c2c2c" stroke="#cfcfcf" stroke-width="1.8"/>
<path d="M137 201 H148 M137 205.5 H148" stroke="#cfcfcf" stroke-width="1.5"/>
<polyline points="167.0,193.0 172.5,200.5 178.0,193.0" fill="none" stroke="#e8e8e8" stroke-width="3" stroke-linecap="round" stroke-linejoin="round"/>
<path d="M122.5 239.5 L136.5 253 L147.5 241.5 L134.5 230.5 Z" fill="#e5a443" stroke="#f6d88a" stroke-width="1.4" stroke-linejoin="round"/>
<path d="M125.5 240.8 L134.8 233.5 L144 242 L136 250 Z" fill="#d98a2c"/>
<path d="M136 232 L141.5 226.5 L150 235 L144.5 240.5 Z" fill="#2c2c2c" stroke="#cfcfcf" stroke-width="1.8" stroke-linejoin="round"/>
<path d="M144.5 229.5 L150.5 223.5 Q152 222 153.5 223.5 L154 224 Q155.5 225.5 154 227 L148 233" fill="#2c2c2c" stroke="#cfcfcf" stroke-width="1.8" stroke-linejoin="round"/>
<rect x="203.6" y="130.5" width="2" height="122.8" fill="#474747"/>
<rect x="236" y="147" width="53.5" height="42" fill="none" stroke="#bdbdbd" stroke-width="2"/>
<rect x="240.5" y="152" width="44.5" height="32" fill="none" stroke="#bdbdbd" stroke-width="1.8"/>
<path d="M240.5 160 H285 M261 160 V184" stroke="#bdbdbd" stroke-width="1.8"/>
<path d="M230 151 H261 M245 137 V167" stroke="#7dd47a" stroke-width="2.2"/>
<polyline points="305.0,166.0 310.5,172.5 316.0,166.0" fill="none" stroke="#e8e8e8" stroke-width="3" stroke-linecap="round" stroke-linejoin="round"/>
<text x="250.9" y="228.0" font-family="Liberation Sans" font-size="22" font-weight="normal" fill="#ececec" stroke="#ececec" stroke-width="0.35" textLength="43.1" lengthAdjust="spacingAndGlyphs">New</text>
<text x="248.4" y="252.0" font-family="Liberation Sans" font-size="22" font-weight="normal" fill="#ececec" stroke="#ececec" stroke-width="0.35" textLength="48.1" lengthAdjust="spacingAndGlyphs">Slide</text>
<rect x="332.5" y="139" width="31" height="24" fill="none" stroke="#bdbdbd" stroke-width="2"/><rect x="336" y="142.5" width="24" height="17" fill="none" stroke="#bdbdbd" stroke-width="1.5"/><path d="M336 147 H360 M348 147 V159.5" stroke="#bdbdbd" stroke-width="1.5"/>
<polyline points="376.5,150.0 382.0,156.5 387.5,150.0" fill="none" stroke="#e8e8e8" stroke-width="3" stroke-linecap="round" stroke-linejoin="round"/>
<rect x="332.5" y="184" width="31" height="23" fill="none" stroke="#bdbdbd" stroke-width="2"/><rect x="337" y="188" width="22.5" height="15" fill="none" stroke="#bdbdbd" stroke-width="1.5"/>
<rect x="330" y="178" width="14" height="14" fill="#2c2c2c"/>
<path d="M342 192 Q342 184 335 184 M338.5 180 L334.5 184 L338.5 188" fill="none" stroke="#4f91d6" stroke-width="2" stroke-linejoin="round"/>
<rect x="332" y="224" width="30" height="5" fill="#7dd47a"/><rect x="332.5" y="233" width="29" height="22" fill="none" stroke="#bdbdbd" stroke-width="2"/><rect x="336" y="236.5" width="22" height="15" fill="none" stroke="#bdbdbd" stroke-width="1.5"/>
<polyline points="376.5,237.5 382.0,244.0 387.5,237.5" fill="none" stroke="#e8e8e8" stroke-width="3" stroke-linecap="round" stroke-linejoin="round"/>
<rect x="414.0" y="130.5" width="2" height="122.8" fill="#474747"/>
<rect x="436.6" y="140.9" width="342.5" height="46.3" rx="6" fill="#2f2f2f" stroke="#3b3b3b" stroke-width="1"/>
<polyline points="759.0,161.0 765.0,168.5 771.0,161.0" fill="none" stroke="#d0d0d0" stroke-width="2.4" stroke-linecap="round" stroke-linejoin="round"/>
<rect x="784.7" y="140.9" width="106.1" height="46.3" rx="6" fill="#2f2f2f" stroke="#3b3b3b" stroke-width="1"/>
<polyline points="871.5,161.0 877.2,168.5 883.0,161.0" fill="none" stroke="#d0d0d0" stroke-width="2.4" stroke-linecap="round" stroke-linejoin="round"/>
<text x="906" y="173.9" font-family="Liberation Sans" font-size="34" fill="#6c6c6c" textLength="24" lengthAdjust="spacingAndGlyphs">A</text>
<polyline points="931,155 934,151.5 937,155" fill="none" stroke="#40628a" stroke-width="1.8"/>
<text x="960.5" y="174" font-family="Liberation Sans" font-size="27" fill="#6c6c6c" textLength="20" lengthAdjust="spacingAndGlyphs">A</text>
<polyline points="983,150 985.5,153 988,150" fill="none" stroke="#40628a" stroke-width="1.8"/>
<rect x="1011.9" y="145.5" width="2" height="35.8" fill="#454545"/>
<text x="1038" y="172" font-family="Liberation Sans" font-size="31" fill="#6c6c6c" textLength="22" lengthAdjust="spacingAndGlyphs">A</text>
<path d="M1053 172 L1062.5 162.5 L1069 169 L1059.5 178.5 Z M1056 169 L1062.5 175.5" fill="none" stroke="#6e4c80" stroke-width="2"/>
<text x="452" y="236.8" font-family="Liberation Sans" font-size="29" font-weight="bold" fill="#6c6c6c" textLength="17" lengthAdjust="spacingAndGlyphs">B</text>
<path d="M514.5 216.5 L508.5 236 M510.5 216.5 H518.5 M504.5 236 H512.5" stroke="#6c6c6c" stroke-width="1.8" fill="none"/>
<text x="554" y="236" font-family="Liberation Sans" font-size="28" fill="#6c6c6c" textLength="18" lengthAdjust="spacingAndGlyphs">U</text><rect x="554.4" y="238.5" width="17.6" height="2" fill="#6c6c6c"/>
<text x="602" y="238" font-family="Liberation Sans" font-size="27" fill="#6c6c6c" textLength="28" lengthAdjust="spacingAndGlyphs">ab</text><rect x="600" y="228" width="31.6" height="1.8" fill="#6c6c6c"/>
<text x="661.4" y="236.8" font-family="Liberation Sans" font-size="27" font-weight="bold" fill="#6c6c6c" textLength="16" lengthAdjust="spacingAndGlyphs">x</text><text x="675.5" y="221" font-family="Liberation Sans" font-size="13" fill="#40628a">2</text>
<text x="713" y="236.8" font-family="Liberation Sans" font-size="27" font-weight="bold" fill="#6c6c6c" textLength="16" lengthAdjust="spacingAndGlyphs">x</text><text x="727" y="242" font-family="Liberation Sans" font-size="13" fill="#40628a">2</text>
<text x="756" y="228.5" font-family="Liberation Sans" font-size="22" fill="#6c6c6c" textLength="31.7" lengthAdjust="spacingAndGlyphs">AV</text>
<path d="M757 236.5 H769.5 M761 232.5 L757 236.5 L761 240.5 M774 236.5 H787 M783 232.5 L787 236.5 L783 240.5" fill="none" stroke="#40628a" stroke-width="1.8"/>
<polyline points="802.0,224.0 808.0,232.5 814.0,224.0" fill="none" stroke="#6c6c6c" stroke-width="3" stroke-linecap="round" stroke-linejoin="round"/>
<text x="833.4" y="237.7" font-family="Liberation Sans" font-size="26" fill="#6c6c6c" textLength="31.3" lengthAdjust="spacingAndGlyphs">Aa</text>
<polyline points="878.0,224.0 883.8,232.5 889.5,224.0" fill="none" stroke="#6c6c6c" stroke-width="3" stroke-linecap="round" stroke-linejoin="round"/>
<rect x="911.6" y="210.0" width="2" height="35.0" fill="#454545"/>
<path d="M945 230 L960 214 Q963 212 966 215 Q968.5 218 966 220.5 L951 235 Z" fill="none" stroke="#6c6c6c" stroke-width="1.8"/><path d="M945 230 L941 234 H948 L951 235" fill="#6c6c6c"/>
<rect x="937.7" y="235.8" width="32.1" height="7.4" fill="#6a6a6a"/>
<polyline points="984.5,224.0 990.0,232.5 995.5,224.0" fill="none" stroke="#6c6c6c" stroke-width="3" stroke-linecap="round" stroke-linejoin="round"/>
<text x="1016" y="232" font-family="Liberation Sans" font-size="27" fill="#6c6c6c" textLength="28" lengthAdjust="spacingAndGlyphs">A</text><rect x="1014" y="235.8" width="32" height="7.4" fill="#6a6a6a"/>
<polyline points="1059.5,224.0 1065.2,232.5 1071.0,224.0" fill="none" stroke="#6c6c6c" stroke-width="3" stroke-linecap="round" stroke-linejoin="round"/>
<rect x="1097.7" y="130.8" width="2" height="122.7" fill="#474747"/>
<rect x="1139.0" y="149.0" width="18.7" height="2" fill="#6c6c6c"/><rect x="1139.0" y="161.8" width="18.7" height="2" fill="#6c6c6c"/><rect x="1139.0" y="174.5" width="18.7" height="2" fill="#6c6c6c"/>
<rect x="1127.8" y="147" width="6" height="6" fill="#40628a"/>
<rect x="1127.8" y="159.7" width="6" height="6" fill="#40628a"/>
<rect x="1127.8" y="172.5" width="6" height="6" fill="#40628a"/>
<polyline points="1174.0,161.0 1180.0,169.0 1186.0,161.0" fill="none" stroke="#6c6c6c" stroke-width="3" stroke-linecap="round" stroke-linejoin="round"/>
<rect x="1214.0" y="149.0" width="20.0" height="2" fill="#6c6c6c"/><rect x="1214.0" y="161.8" width="20.0" height="2" fill="#6c6c6c"/><rect x="1214.0" y="174.5" width="20.0" height="2" fill="#6c6c6c"/>
<text x="1203.5" y="154" font-family="Liberation Sans" font-size="10" font-weight="bold" fill="#40628a">1</text>
<text x="1203.5" y="166.5" font-family="Liberation Sans" font-size="10" font-weight="bold" fill="#40628a">2</text>
<text x="1203.5" y="179" font-family="Liberation Sans" font-size="10" font-weight="bold" fill="#40628a">3</text>
<polyline points="1250.0,161.0 1256.0,169.0 1262.0,161.0" fill="none" stroke="#6c6c6c" stroke-width="3" stroke-linecap="round" stroke-linejoin="round"/>
<rect x="1283.8" y="147.0" width="2" height="33.5" fill="#454545"/>
<rect x="1311.7" y="150" width="28" height="2" fill="#6c6c6c"/><rect x="1311.7" y="174" width="28" height="2" fill="#6c6c6c"/>
<rect x="1327.7" y="158" width="12" height="2" fill="#6c6c6c"/><rect x="1327.7" y="166" width="12" height="2" fill="#6c6c6c"/>
<path d="M1323.7 163 H1312.7 M1316.7 159 L1312.7 163 L1316.7 167" fill="none" stroke="#40628a" stroke-width="2"/>
<rect x="1364" y="150" width="28" height="2" fill="#6c6c6c"/><rect x="1364" y="174" width="28" height="2" fill="#6c6c6c"/>
<rect x="1380" y="158" width="12" height="2" fill="#6c6c6c"/><rect x="1380" y="166" width="12" height="2" fill="#6c6c6c"/>
<path d="M1364 163 H1375 M1371 159 L1375 163 L1371 167" fill="none" stroke="#40628a" stroke-width="2"/>
<rect x="1418.3" y="147.0" width="2" height="33.5" fill="#454545"/>
<rect x="1457.0" y="149.0" width="19.4" height="2" fill="#6c6c6c"/><rect x="1457.0" y="157.5" width="19.4" height="2" fill="#6c6c6c"/><rect x="1457.0" y="166.0" width="19.4" height="2" fill="#6c6c6c"/><rect x="1457.0" y="174.5" width="19.4" height="2" fill="#6c6c6c"/>
<path d="M1447.5 151 V162 M1443.5 155 L1447.5 151 L1451.5 155 M1447.5 166 V177 M1443.5 173 L1447.5 177 L1451.5 173" fill="none" stroke="#40628a" stroke-width="2"/>
<polyline points="1490.5,161.0 1496.2,169.0 1502.0,161.0" fill="none" stroke="#6c6c6c" stroke-width="3" stroke-linecap="round" stroke-linejoin="round"/>
<rect x="1524.0" y="147.0" width="2" height="33.5" fill="#454545"/>
<rect x="1553.8" y="156" width="9.8" height="2" fill="#40628a"/><rect x="1553.8" y="162.5" width="9.8" height="2" fill="#40628a"/><rect x="1553.8" y="169" width="9.8" height="2" fill="#40628a"/>
<rect x="1569" y="156" width="9.8" height="2" fill="#40628a"/><rect x="1569" y="162.5" width="9.8" height="2" fill="#40628a"/><rect x="1569" y="169" width="9.8" height="2" fill="#40628a"/>
<polyline points="1596.0,161.0 1602.0,169.0 1608.0,161.0" fill="none" stroke="#6c6c6c" stroke-width="3" stroke-linecap="round" stroke-linejoin="round"/>
<rect x="1129.5" y="213.5" width="28" height="2" fill="#6c6c6c"/><rect x="1129.5" y="222.0" width="20" height="2" fill="#6c6c6c"/><rect x="1129.5" y="230.5" width="28" height="2" fill="#6c6c6c"/><rect x="1129.5" y="239.0" width="20" height="2" fill="#6c6c6c"/>
<rect x="1181.8" y="213.5" width="28" height="2" fill="#6c6c6c"/><rect x="1185.8" y="222.0" width="20" height="2" fill="#6c6c6c"/><rect x="1181.8" y="230.5" width="28" height="2" fill="#6c6c6c"/><rect x="1185.8" y="239.0" width="20" height="2" fill="#6c6c6c"/>
<rect x="1234.0" y="213.5" width="28" height="2" fill="#6c6c6c"/><rect x="1242.0" y="222.0" width="20" height="2" fill="#6c6c6c"/><rect x="1234.0" y="230.5" width="28" height="2" fill="#6c6c6c"/><rect x="1242.0" y="239.0" width="20" height="2" fill="#6c6c6c"/>
<rect x="1286.0" y="213.5" width="28" height="2" fill="#6c6c6c"/><rect x="1286.0" y="222.0" width="28" height="2" fill="#6c6c6c"/><rect x="1286.0" y="230.5" width="28" height="2" fill="#6c6c6c"/><rect x="1286.0" y="239.0" width="28" height="2" fill="#6c6c6c"/>
<rect x="1339.8" y="210.0" width="2" height="35.0" fill="#454545"/>
<path d="M1372 214 V243 M1368 239 L1372 243 L1376 239" fill="none" stroke="#6c6c6c" stroke-width="1.8"/>
<text x="1380" y="230" font-family="Liberation Sans" font-size="19" fill="#40628a">A</text>
<path d="M1390 231 V243 M1386 239 L1390 243 L1394 239" fill="none" stroke="#6c6c6c" stroke-width="1.8"/>
<polyline points="1412.0,224.0 1418.0,232.5 1424.0,224.0" fill="none" stroke="#6c6c6c" stroke-width="3" stroke-linecap="round" stroke-linejoin="round"/>
<path d="M1448 214.5 H1443 V240 H1448 M1469 214.5 H1474 V240 H1469 M1446 227 H1471" fill="none" stroke="#6c6c6c" stroke-width="1.8"/>
<path d="M1458.5 214 V224 M1455 217.5 L1458.5 214 L1462 217.5 M1458.5 230 V241 M1455 237.5 L1458.5 241 L1462 237.5" fill="none" stroke="#40628a" stroke-width="1.8"/>
<polyline points="1487.5,224.0 1493.8,232.5 1500.0,224.0" fill="none" stroke="#6c6c6c" stroke-width="3" stroke-linecap="round" stroke-linejoin="round"/>
<path d="M1633 146.5 H1668.5 L1686 163.8 H1670 V174 L1665 181.8 H1633 L1652 163.8 Z" fill="#3c5a3c" stroke="#587658" stroke-width="1.2" stroke-linejoin="round"/>
<rect x="1654.5" y="166.5" width="34" height="22.5" fill="#2c2c2c" stroke="#2c2c2c" stroke-width="3"/>
<rect x="1654.5" y="166.5" width="34" height="22.5" fill="#2c2c2c" stroke="#777" stroke-width="2"/>
<path d="M1664 174.5 H1684 M1664 180.5 H1684" stroke="#777" stroke-width="1.6"/><path d="M1659.5 174.5 H1661.5 M1659.5 180.5 H1661.5" stroke="#777" stroke-width="1.6"/>
<polyline points="1704.0,165.0 1710.0,172.5 1716.0,165.0" fill="none" stroke="#6c6c6c" stroke-width="3" stroke-linecap="round" stroke-linejoin="round"/>
<text x="1622.7" y="228.6" font-family="Liberation Sans" font-size="22" font-weight="normal" fill="#8d8d8d" stroke="#8d8d8d" stroke-width="0.35" textLength="104.3" lengthAdjust="spacingAndGlyphs">Convert to</text>
<text x="1630.0" y="252.4" font-family="Liberation Sans" font-size="22" font-weight="normal" fill="#8d8d8d" stroke="#8d8d8d" stroke-width="0.35" textLength="88.9" lengthAdjust="spacingAndGlyphs">SmartArt</text>
<rect x="1751.9" y="129.8" width="2" height="123.3" fill="#474747"/>
<rect x="1783" y="147.5" width="53.5" height="39" fill="#2c2c2c" stroke="#d8d8d8" stroke-width="2.2"/>
<path d="M1784.2 172.5 L1797.8 157.5 L1816.5 176 L1821.5 167.5 L1835.4 182 V185.4 H1784.2 Z" fill="#2a62b0"/>
<path d="M1784.2 172.5 L1797.8 157.5 L1824 185 M1816.5 176 L1821.5 167.5 L1835.4 182" fill="none" stroke="#7cb2ea" stroke-width="1.3"/>
<circle cx="1824" cy="157" r="4.6" fill="#f0b050"/><circle cx="1827" cy="154.2" r="4" fill="#2c2c2c"/>
<polyline points="1852.0,165.0 1858.0,173.0 1864.0,165.0" fill="none" stroke="#e8e8e8" stroke-width="3" stroke-linecap="round" stroke-linejoin="round"/>
<text x="1786.5" y="228.6" font-family="Liberation Sans" font-size="22" font-weight="normal" fill="#ececec" stroke="#ececec" stroke-width="0.35" textLength="69.5" lengthAdjust="spacingAndGlyphs">Picture</text>
<rect x="1882.5" y="148.5" width="20" height="20.5" fill="#2a62b0" stroke="#7cb2ea" stroke-width="1.2"/>
<circle cx="1902" cy="169" r="11.8" fill="#2c2c2c"/>
<circle cx="1902" cy="169" r="10.3" fill="#2c2c2c" stroke="#d8d8d8" stroke-width="2.2"/>
<polyline points="1928.5,161.5 1934.2,169.0 1940.0,161.5" fill="none" stroke="#e8e8e8" stroke-width="3" stroke-linecap="round" stroke-linejoin="round"/>
<rect x="1884.5" y="216" width="27.5" height="23.5" fill="none" stroke="#d8d8d8" stroke-width="1.6"/>
<rect x="1881.9" y="213.4" width="5.2" height="5.2" fill="#4a8fd8"/>
<rect x="1909.4" y="213.4" width="5.2" height="5.2" fill="#4a8fd8"/>
<rect x="1881.9" y="236.9" width="5.2" height="5.2" fill="#4a8fd8"/>
<rect x="1909.4" y="236.9" width="5.2" height="5.2" fill="#4a8fd8"/>
<text x="1890" y="236" font-family="Liberation Sans" font-size="19" font-weight="bold" fill="#4a8fd8">A</text>
<rect x="1965.9" y="129.8" width="2" height="123.3" fill="#474747"/>
<rect x="2004.8" y="148.8" width="38.5" height="38.5" fill="#e09b3d" stroke="#f6d27e" stroke-width="1.2"/>
<rect x="1997.5" y="141.2" width="21.2" height="21.5" fill="#2c2c2c" stroke="#2c2c2c" stroke-width="4"/>
<rect x="1997.5" y="141.2" width="21.2" height="21.5" fill="#2c2c2c" stroke="#d8d8d8" stroke-width="2"/>
<rect x="2029.3" y="173" width="21.6" height="21.9" fill="#2c2c2c" stroke="#2c2c2c" stroke-width="4"/>
<rect x="2029.3" y="173" width="21.6" height="21.9" fill="#2c2c2c" stroke="#d8d8d8" stroke-width="2"/>
<polyline points="2066.0,165.0 2072.0,172.5 2078.0,165.0" fill="none" stroke="#e8e8e8" stroke-width="3" stroke-linecap="round" stroke-linejoin="round"/>
<text x="1994.3" y="228.6" font-family="Liberation Sans" font-size="22" font-weight="normal" fill="#ececec" stroke="#ececec" stroke-width="0.35" textLength="79.4" lengthAdjust="spacingAndGlyphs">Arrange</text>
<rect x="2096.6" y="140.7" width="55" height="55" rx="3" fill="none" stroke="#6a6a6a" stroke-width="2"/>
<path d="M2156 161 L2126 188 Q2122 191 2124.5 187.5 L2153 158 Q2157 157 2156 161 Z" fill="#2c2c2c" stroke="#6a6a6a" stroke-width="1.8"/>
<path d="M2124 186 Q2116 187 2113 197 Q2122 199 2128 191 Z" fill="#35577d"/>
<polyline points="2166.5,165.0 2172.2,172.5 2178.0,165.0" fill="none" stroke="#6c6c6c" stroke-width="3" stroke-linecap="round" stroke-linejoin="round"/>
<text x="2106.6" y="228.6" font-family="Liberation Sans" font-size="22" font-weight="normal" fill="#8d8d8d" stroke="#8d8d8d" stroke-width="0.35" textLength="56.7" lengthAdjust="spacingAndGlyphs">Quick</text>
<text x="2104.0" y="252.4" font-family="Liberation Sans" font-size="22" font-weight="normal" fill="#8d8d8d" stroke="#8d8d8d" stroke-width="0.35" textLength="61.1" lengthAdjust="spacingAndGlyphs">Styles</text>
<path d="M2203 164 L2213 154 L2222 163 L2212 173 Z" fill="none" stroke="#6c6c6c" stroke-width="1.8"/><path d="M2209 152 V160" stroke="#6c6c6c" stroke-width="1.8"/>
<path d="M2224 160 Q2228 166 2226 170 Q2222 168 2224 160 Z" fill="#35577d"/>
<rect x="2195.5" y="173" width="32.9" height="7" fill="#6a6a6a"/>
<polyline points="2242.0,161.0 2248.0,169.0 2254.0,161.0" fill="none" stroke="#6c6c6c" stroke-width="3" stroke-linecap="round" stroke-linejoin="round"/>
<path d="M2212 214 H2198 V235 H2204" fill="none" stroke="#6c6c6c" stroke-width="1.8"/>
<path d="M2206 233 L2223 214 Q2226 212 2228 215 Q2229 218 2227 220 L2210 236 L2205 237 Z" fill="none" stroke="#3a6596" stroke-width="1.8"/>
<rect x="2195.5" y="236" width="32.9" height="7.2" fill="#6a6a6a"/>
<polyline points="2242.0,224.0 2248.0,232.5 2254.0,224.0" fill="none" stroke="#6c6c6c" stroke-width="3" stroke-linecap="round" stroke-linejoin="round"/>
<rect x="2280.0" y="129.8" width="2" height="123.3" fill="#474747"/>
<rect x="2316" y="140" width="55.5" height="55.8" fill="none" stroke="#d4522a" stroke-width="2.2"/>
<rect x="2321" y="145" width="20" height="20.5" fill="none" stroke="#d4522a" stroke-width="2"/><rect x="2346.5" y="145" width="20" height="20.5" fill="none" stroke="#d4522a" stroke-width="2"/>
<rect x="2321" y="170.5" width="20" height="20.5" fill="none" stroke="#d4522a" stroke-width="2"/><rect x="2346.5" y="170.5" width="20" height="20.5" fill="none" stroke="#d4522a" stroke-width="2"/>
<text x="2306.0" y="228.6" font-family="Liberation Sans" font-size="22" font-weight="normal" fill="#ececec" stroke="#ececec" stroke-width="0.35" textLength="77.8" lengthAdjust="spacingAndGlyphs">Add-ins</text>
</svg>
<svg class="a" style="left:0;top:1690px;position:absolute" width="2434" height="44">
<text x="45.2" y="32.5" font-family="Liberation Sans" font-size="25" font-weight="normal" fill="#e6e6e6"  textLength="122.8" lengthAdjust="spacingAndGlyphs">Slide 1 of 2</text>
<text x="211.8" y="32.5" font-family="Liberation Sans" font-size="25" font-weight="normal" fill="#e6e6e6"  textLength="256.6" lengthAdjust="spacingAndGlyphs">English (United States)</text>
<circle cx="523" cy="12.900000000000091" r="3.7" fill="none" stroke="#f2f2f2" stroke-width="2"/>
<path d="M528.5 20.5 L534 18.200000000000045 Q536.2 17 535.6 15 Q535 13.299999999999955 532.8 14 Q528 16.59999999999991 523 16.59999999999991 Q518 16.59999999999991 513.2 14 Q511 13.299999999999955 510.5 15.299999999999955 Q510.3 17.5 513 18.59999999999991 L517.6 20.59999999999991 V27 L515.4 34 Q514.6 37.299999999999955 517.2 37.59999999999991 Q519.2 37.59999999999991 520.2 35 L523 28 L524.6 32 M525.5 24 L539.5 37.5 M539 24 L526 37.5" fill="none" stroke="#f2f2f2" stroke-width="2" stroke-linejoin="round"/>
<text x="551.8" y="32.5" font-family="Liberation Sans" font-size="25" font-weight="normal" fill="#e6e6e6"  textLength="276.2" lengthAdjust="spacingAndGlyphs">Accessibility: Investigate</text>
<path d="M1359 16 L1365 10.5 L1371 16 Z" fill="#e6e6e6"/>
<rect x="1351.2" y="19.5" width="27.4" height="2" fill="#e6e6e6"/>
<rect x="1351.2" y="24.5" width="27.4" height="2" fill="#e6e6e6"/>
<rect x="1351.2" y="29.5" width="27.4" height="2" fill="#e6e6e6"/>
<rect x="1351.2" y="33.5" width="20" height="2" fill="#e6e6e6"/>
<text x="1391.0" y="32.5" font-family="Liberation Sans" font-size="25" font-weight="normal" fill="#e6e6e6"  textLength="65.7" lengthAdjust="spacingAndGlyphs">Notes</text>
<path d="M1498.5 14 Q1498.5 12 1500.5 12 H1521.5 Q1523.5 12 1523.5 14 V27 Q1523.5 29 1521.5 29 H1508 L1502 35 V29 H1500.5 Q1498.5 29 1498.5 27 Z" fill="#e6e6e6"/>
<text x="1536.3" y="32.5" font-family="Liberation Sans" font-size="25" font-weight="normal" fill="#e6e6e6"  textLength="120.3" lengthAdjust="spacingAndGlyphs">Comments</text>
<rect x="1678" y="0.5" width="73.6" height="44" fill="#5b5b5b"/>
<rect x="1702" y="10.400000000000091" width="26" height="24.4" rx="1.5" fill="none" stroke="#f0f0f0" stroke-width="2.2"/><rect x="1701" y="9.400000000000091" width="7" height="26.4" fill="#f0f0f0"/><rect x="1712" y="15" width="11" height="6" fill="#f0f0f0"/><rect x="1708" y="29" width="20" height="2" fill="#f0f0f0"/>
<rect x="1771.6" y="12" width="14" height="9.8" rx="2" fill="#e6e6e6"/>
<rect x="1788.5" y="12" width="14" height="9.8" rx="2" fill="#e6e6e6"/>
<rect x="1771.6" y="24.5" width="14" height="9.8" rx="2" fill="#e6e6e6"/>
<rect x="1788.5" y="24.5" width="14" height="9.8" rx="2" fill="#e6e6e6"/>
<path d="M1844.5 12.5 H1858.5 Q1859 14 1859 14 Q1859 12.5 1860 12.5 H1873.5 V33 H1860 L1859 35 L1858 33 H1844.5 Z M1859 14 V33" fill="none" stroke="#e6e6e6" stroke-width="2"/>
<path d="M1848 18 H1855.5 M1862.5 18 H1870" stroke="#e6e6e6" stroke-width="1.6"/>
<path d="M1848 22.5 H1855.5 M1862.5 22.5 H1870" stroke="#e6e6e6" stroke-width="1.6"/>
<path d="M1848 27 H1855.5 M1862.5 27 H1870" stroke="#e6e6e6" stroke-width="1.6"/>
<rect x="1916" y="12" width="29.8" height="4" fill="#e6e6e6"/><rect x="1918" y="15" width="25.8" height="13" fill="none" stroke="#e6e6e6" stroke-width="2"/><path d="M1924 21 H1938 M1931 28 V36 M1925 36.5 H1937" stroke="#e6e6e6" stroke-width="2"/>
<rect x="1981.6" y="21.799999999999955" width="17.4" height="3.2" fill="#e6e6e6"/>
<rect x="2011.4" y="20.299999999999955" width="201.5" height="7.5" rx="3.75" fill="#6b6b6b"/>
<circle cx="2112" cy="23.299999999999955" r="3" fill="#4a4a4a"/>
<circle cx="2073.6" cy="23.299999999999955" r="16" fill="#a8a8a8"/>
<rect x="2225.4" y="21.699999999999953" width="17.4" height="3.2" fill="#e6e6e6"/><rect x="2232.5" y="14.599999999999909" width="3.2" height="17.4" fill="#e6e6e6"/>
<text x="2277.6" y="32.5" font-family="Liberation Sans" font-size="25" font-weight="normal" fill="#e6e6e6"  textLength="49.8" lengthAdjust="spacingAndGlyphs">59%</text>
<rect x="2370.7" y="10.400000000000091" width="25.3" height="25.4" fill="none" stroke="#e6e6e6" stroke-width="2"/>
<path d="M2383.3 14 V32.5 M2374 23.09999999999991 H2392.5 M2380.5 17 L2383.3 14 L2386 17 M2380.5 29.5 L2383.3 32.5 L2386 29.5 M2377 20.299999999999955 L2374 23.09999999999991 L2377 26 M2389.5 20.299999999999955 L2392.5 23.09999999999991 L2389.5 26" fill="none" stroke="#e6e6e6" stroke-width="1.6"/>
</svg>
</div></body></html>
